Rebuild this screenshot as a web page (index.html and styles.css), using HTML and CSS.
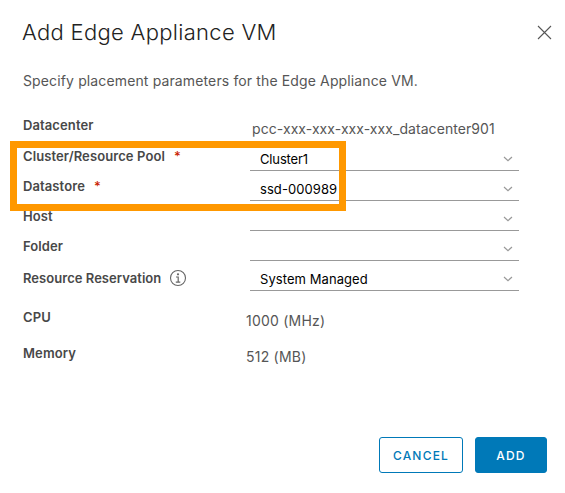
FILE: index.html
```html
<!DOCTYPE html>
<html lang="en">
<head>
<meta charset="utf-8">
<title>Add Edge Appliance VM</title>
<link rel="stylesheet" href="styles.css">
</head>
<body>
<svg class="defs" aria-hidden="true"><symbol id="chevron" viewBox="0 0 10 6"><path d="M1 1 L5 4.6 L9 1" fill="none" stroke="currentColor" stroke-width="1.2"/></symbol></svg>
<main class="dialog">
  <header class="header">
    <h1>Add Edge Appliance VM</h1>
    <button class="close" aria-label="Close"><svg width="15" height="15" viewBox="0 0 15 15"><path d="M1 1 L14 14 M14 1 L1 14" fill="none" stroke="#565656" stroke-width="1.1"/></svg></button>
  </header>
  <p class="intro">Specify placement parameters for the Edge Appliance VM.</p>
  <div class="form">
    <div class="row first"><label>Datacenter</label><div class="plain name">pcc-xxx-xxx-xxx-xxx_datacenter901</div></div>
    <div class="required-fields">
      <div class="row"><label>Cluster/Resource Pool<span class="star">*</span></label><div class="select"><span class="cluster">Cluster1</span><svg class="chevron"><use href="#chevron"/></svg></div></div>
      <div class="row"><label>Datastore<span class="star">*</span></label><div class="select"><span>ssd-000989</span><svg class="chevron"><use href="#chevron"/></svg></div></div>
      <div class="highlight"></div>
    </div>
    <div class="row host"><label>Host</label><div class="select"><span></span><svg class="chevron"><use href="#chevron"/></svg></div></div>
    <div class="row folder"><label>Folder</label><div class="select"><span></span><svg class="chevron"><use href="#chevron"/></svg></div></div>
    <div class="row reservation"><label><span class="label-text">Resource Reservation</span><svg class="info" width="18" height="18" viewBox="0 0 18 18"><circle cx="9" cy="9" r="7.5" fill="none" stroke="#666" stroke-width="1.1"/><circle cx="9" cy="5.3" r="1.1" fill="#666"/><path d="M7 8 H9.2 V13 M6.8 13.1 H11.3" fill="none" stroke="#666" stroke-width="1.2"/></svg></label><div class="select"><span>System Managed</span><svg class="chevron"><use href="#chevron"/></svg></div></div>
  </div>
  <div class="resources">
    <div class="row"><label>CPU</label><div class="plain">1000 (MHz)</div></div>
    <div class="row"><label>Memory</label><div class="plain">512 (MB)</div></div>
  </div>
  <footer class="actions">
    <button class="btn outline">CANCEL</button>
    <button class="btn primary">ADD</button>
  </footer>
</main>
</body>
</html>
```
FILE: styles.css
```css
* { box-sizing: border-box; }
body { margin: 0; background: #fff; font-family: Inter, "Liberation Sans", sans-serif; color: #565656; }
.defs { position: absolute; width: 0; height: 0; }
.dialog { width: 565px; height: 493px; padding: 17px 18px 0 23px; display: flex; flex-direction: column; overflow: hidden; }
span { white-space: nowrap; }
button { font-family: inherit; cursor: pointer; }
.header { height: 30px; display: flex; align-items: center; justify-content: space-between; }
h1 { margin: 0 0 0 -1px; font-size: 22px; font-weight: 300; line-height: 30px; letter-spacing: 0.3px; color: #222; }
.close { border: 0; background: none; padding: 0; width: 15px; height: 15px; margin-right: -5px; }
.close svg { display: block; }
.intro { margin: 24px 0 0; font-size: 14px; line-height: 20px; letter-spacing: 0.13px; }
.form { margin-top: 19px; }
.row { display: grid; grid-template-columns: 227px 269px; height: 30px; }
.row.first { height: 31px; }
label { display: flex; align-items: center; height: 30px; font-size: 13px; font-weight: 600; letter-spacing: 0.1px; color: #484848; }
.star { color: #c92100; font-weight: 500; margin-left: 9px; }
.host label, .folder label { padding-bottom: 1px; }
.reservation label { padding-top: 5px; }
.label-text { margin-top: -1px; letter-spacing: 0.04px; }
.plain { font-size: 14px; line-height: 37px; letter-spacing: 0.22px; }
.name { padding-left: 2px; letter-spacing: 0.06px; }
.select { display: flex; justify-content: space-between; align-items: center; border-bottom: 1px solid #999; font-size: 13px; color: #000; padding: 7px 6px 0 10px; letter-spacing: 0.07px; }
.cluster { letter-spacing: -0.15px; }
.chevron { width: 10px; height: 6px; color: #999; margin-top: -1px; }
.info { margin-left: 8px; margin-top: -1px; }
.required-fields { position: relative; }
.highlight { position: absolute; left: -13px; top: 0; width: 336px; height: 70px; border: 7px solid #ff9800; }
.resources { margin-top: 11px; }
.resources .row { grid-template-columns: 223px 269px; height: 36px; }
.resources .plain { line-height: 38px; }
.actions { display: flex; gap: 12px; justify-content: flex-end; margin-top: 63px; }
.btn { height: 36px; border: 1px solid #0079b8; border-radius: 3px; padding: 0; font-size: 12px; font-weight: 500; letter-spacing: 1.2px; }
.outline { width: 84px; background: #fff; color: #0079b8; }
.primary { width: 72px; background: #0079b8; color: #fff; }
```
